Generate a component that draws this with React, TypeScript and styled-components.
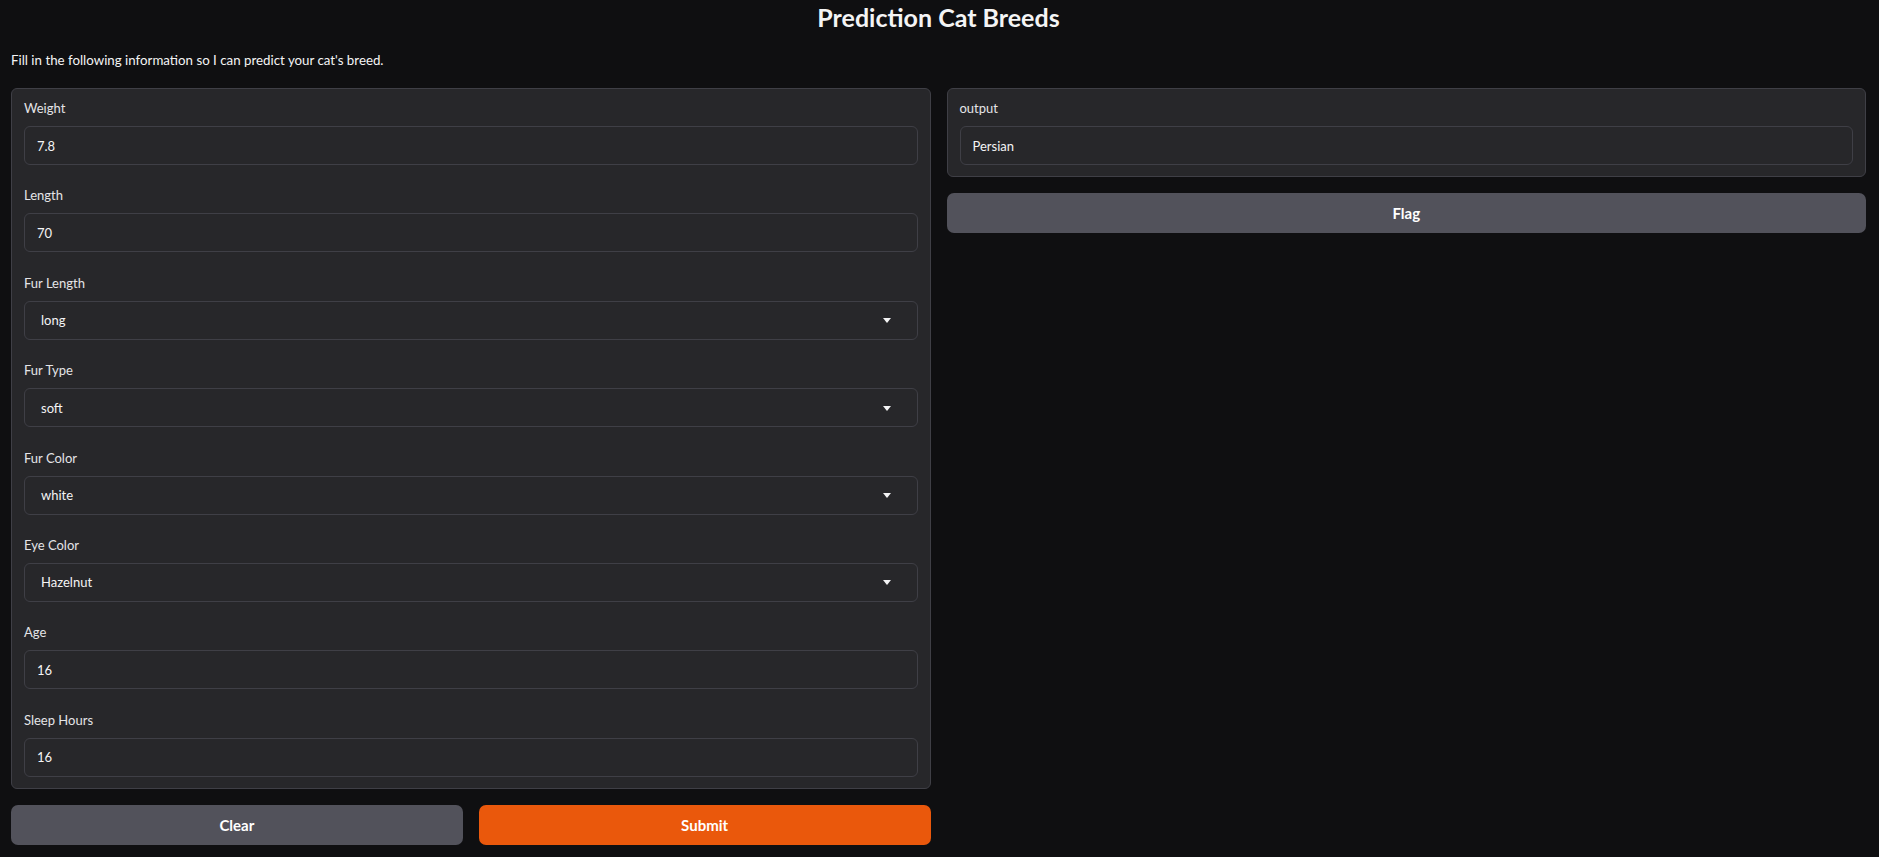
import styled, { createGlobalStyle } from "styled-components";

// 전역 스타일: 어두운 배경과 기본 글꼴
const GlobalStyle = createGlobalStyle`
  html, body {
    margin: 0;
    padding: 0;
    background: #0f0f11;
  }
  body {
    font-family: Lato, "Noto Sans", "Liberation Sans", sans-serif;
    color: #f4f4f5;
  }
  * {
    box-sizing: border-box;
  }
`;

const Page = styled.div`
  min-height: 857px;
  padding: 0 13px 0 11px;
`;

const Title = styled.h1`
  margin: 0;
  text-align: center;
  font-size: 25px;
  line-height: 34px;
  font-weight: 700;
  color: #f4f4f5;
`;

const Description = styled.p`
  margin: 16px 0 18px;
  font-size: 13.3px;
  line-height: 20px;
  color: #f4f4f5;
`;

const Row = styled.div`
  display: flex;
  gap: 16px;
  align-items: flex-start;
`;

const Column = styled.div`
  flex: 1;
  min-width: 0;
  display: flex;
  flex-direction: column;
  gap: 16px;
`;

const Panel = styled.div`
  background: #27272a;
  border: 1px solid #3f3f46;
  border-radius: 6px;
  padding: 9px 12px 11px;
  display: flex;
  flex-direction: column;
  gap: 20.4px;
`;

const Field = styled.div`
  display: flex;
  flex-direction: column;
  gap: 8px;
`;

const Label = styled.span`
  font-size: 13px;
  line-height: 20px;
  color: #e4e4e7;
`;

const Box = styled.div<{ $select?: boolean }>`
  position: relative;
  height: 39px;
  display: flex;
  align-items: center;
  padding: 0 ${(p) => (p.$select ? "40px" : "12px")} 0 ${(p) => (p.$select ? "16px" : "12px")};
  background: #27272a;
  border: 1px solid #3f3f46;
  border-radius: 6px;
  font-size: 13px;
  color: #f4f4f5;
`;

// 드롭다운 화살표: 작은 아래쪽 삼각형
const Caret = styled.span`
  position: absolute;
  right: 26px;
  top: 50%;
  margin-top: -2px;
  width: 0;
  height: 0;
  border-left: 4.5px solid transparent;
  border-right: 4.5px solid transparent;
  border-top: 5px solid #f4f4f5;
`;

const ButtonRow = styled.div`
  display: flex;
  gap: 16px;
  & > button {
    flex: 1;
  }
`;

const Button = styled.button<{ $primary?: boolean }>`
  height: 40px;
  flex-shrink: 0;
  border: none;
  border-radius: 7px;
  background: ${(p) => (p.$primary ? "#ea580c" : "#52525b")};
  color: #ffffff;
  font-family: inherit;
  font-size: 15px;
  font-weight: 700;
  cursor: pointer;
`;

const fields = [
  { label: "Weight", value: "7.8" },
  { label: "Length", value: "70" },
  { label: "Fur Length", value: "long", select: true },
  { label: "Fur Type", value: "soft", select: true },
  { label: "Fur Color", value: "white", select: true },
  { label: "Eye Color", value: "Hazelnut", select: true },
  { label: "Age", value: "16" },
  { label: "Sleep Hours", value: "16" },
];

export default function App() {
  return (
    <Page>
      <GlobalStyle />
      <Title>Prediction Cat Breeds</Title>
      <Description>
        Fill in the following information so I can predict your cat's breed.
      </Description>
      <Row>
        <Column>
          <Panel>
            {fields.map((f) => (
              <Field key={f.label}>
                <Label>{f.label}</Label>
                <Box $select={f.select}>
                  {f.value}
                  {f.select && <Caret />}
                </Box>
              </Field>
            ))}
          </Panel>
          <ButtonRow>
            <Button>Clear</Button>
            <Button $primary>Submit</Button>
          </ButtonRow>
        </Column>
        <Column>
          <Panel>
            <Field>
              <Label>output</Label>
              <Box>Persian</Box>
            </Field>
          </Panel>
          <Button>Flag</Button>
        </Column>
      </Row>
    </Page>
  );
}
